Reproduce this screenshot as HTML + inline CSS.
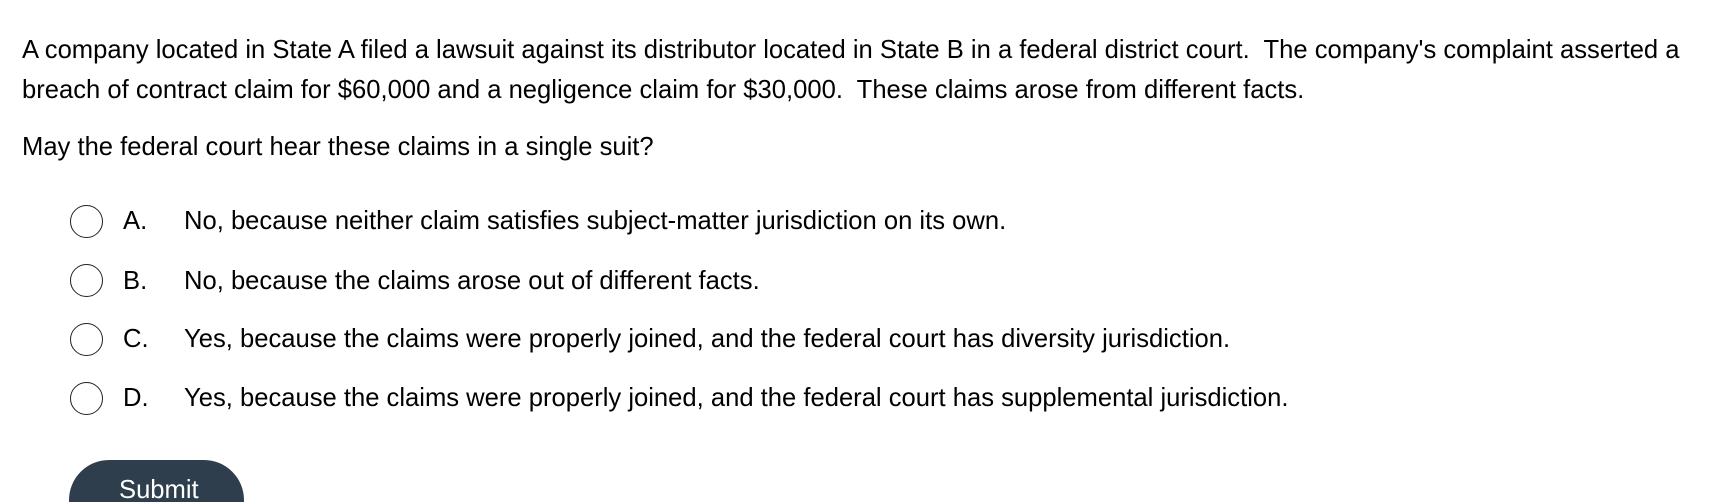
<!DOCTYPE html>
<html><head><meta charset="utf-8"><style>
html,body{margin:0;padding:0;background:#fff;width:1721px;height:502px;overflow:hidden;}
body{font-family:"Liberation Sans",Arial,sans-serif;color:#000;font-size:25.6px;position:relative;}
.l{position:absolute;left:22px;white-space:pre;line-height:1;}
.r{position:absolute;left:70px;width:33px;height:33px;border:1.5px solid #222;border-radius:50%;box-sizing:border-box;}
.k{position:absolute;left:123px;white-space:pre;line-height:1;}
.t{position:absolute;left:184px;white-space:pre;line-height:1;}
.btn{position:absolute;left:69px;top:460px;width:175px;height:42px;background:#2f3e4d;border-radius:40px 40px 0 0/40px 40px 0 0;overflow:hidden;}
.btn span{position:absolute;left:50px;top:18px;color:#fff;font-size:25.6px;line-height:1;}
</style></head><body>
<div class="l" style="top:38px">A company located in State A filed a lawsuit against its distributor located in State B in a federal district court.  The company's complaint asserted a</div>
<div class="l" style="top:78px">breach of contract claim for $60,000 and a negligence claim for $30,000.  These claims arose from different facts.</div>
<div class="l" style="top:135px">May the federal court hear these claims in a single suit?</div>

<div class="r" style="top:205px"></div><div class="k" style="top:209px">A.</div><div class="t" style="top:209px">No, because neither claim satisfies subject-matter jurisdiction on its own.</div>
<div class="r" style="top:264px"></div><div class="k" style="top:269px">B.</div><div class="t" style="top:269px">No, because the claims arose out of different facts.</div>
<div class="r" style="top:323px"></div><div class="k" style="top:327px">C.</div><div class="t" style="top:327px">Yes, because the claims were properly joined, and the federal court has diversity jurisdiction.</div>
<div class="r" style="top:382px"></div><div class="k" style="top:386px">D.</div><div class="t" style="top:386px">Yes, because the claims were properly joined, and the federal court has supplemental jurisdiction.</div>

<div class="btn"><span>Submit</span></div>
</body></html>
